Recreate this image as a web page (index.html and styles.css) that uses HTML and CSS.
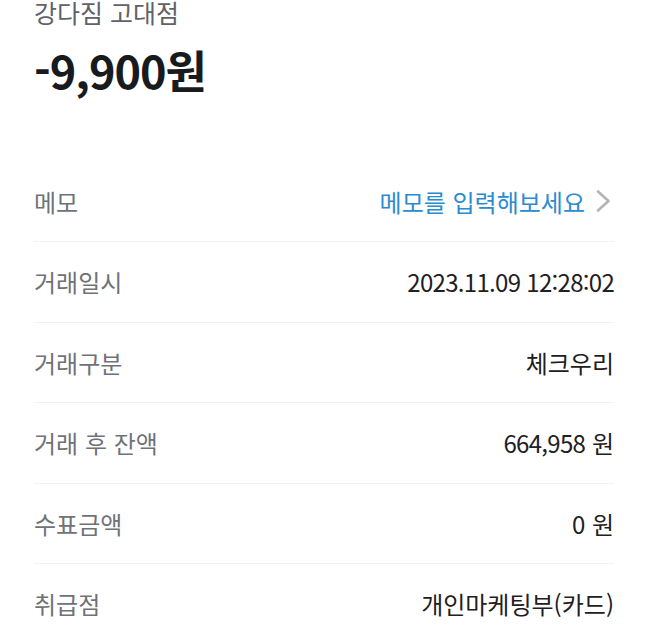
FILE: index.html
```html
<!DOCTYPE html>
<html lang="ko">
<head>
<meta charset="utf-8">
<link rel="stylesheet" href="styles.css">
</head>
<body>
<div class="page">
  <div class="header">
    <div class="store">강다짐 고대점</div>
    <div class="amount">-9,900원</div>
  </div>
  <div class="list">
    <div class="row">
      <span class="label">메모</span>
      <span class="value link">메모를 입력해보세요
        <svg class="chev" width="16" height="24" viewBox="0 0 16 24"><path d="M3 2.5 L13.5 12 L3 21.5" fill="none" stroke="#b4b4b4" stroke-width="2.6" stroke-linecap="round" stroke-linejoin="round"/></svg>
      </span>
    </div>
    <div class="row">
      <span class="label">거래일시</span>
      <span class="value num">2023.11.09 12:28:02</span>
    </div>
    <div class="row">
      <span class="label">거래구분</span>
      <span class="value">체크우리</span>
    </div>
    <div class="row">
      <span class="label">거래 후 잔액</span>
      <span class="value"><span class="num">664,958</span> 원</span>
    </div>
    <div class="row">
      <span class="label">수표금액</span>
      <span class="value">0 원</span>
    </div>
    <div class="row last">
      <span class="label">취급점</span>
      <span class="value">개인마케팅부(카드)</span>
    </div>
  </div>
</div>
</body>
</html>
```
FILE: styles.css
```css
html, body {
  margin: 0;
  padding: 0;
  background: #ffffff;
}
body {
  font-family: "Noto Sans CJK KR", "Noto Sans", sans-serif;
  overflow: hidden;
}
.page {
  padding: 0 34px;
  width: 580px;
}
.header {
  margin-top: -5px;
}
.store {
  font-size: 25px;
  line-height: 34px;
  color: #5f6266;
}
.amount {
  font-size: 45px;
  font-weight: 700;
  line-height: 54px;
  margin-top: 14px;
  color: #181a1d;
  letter-spacing: -1px;
}
.list {
  margin-top: 64.5px;
}
.row {
  height: 79.5px;
  display: flex;
  align-items: center;
  justify-content: space-between;
  border-bottom: 1px solid #f0f2f4;
  font-size: 24px;
}
.row.last {
  border-bottom: none;
}
.label {
  color: #6f7276;
}
.value {
  color: #1f2022;
}
.num {
  letter-spacing: -0.7px;
}
.link {
  color: #2b8bd0;
  display: flex;
  align-items: center;
  gap: 10px;
  margin-right: 3px;
}
.chev {
  display: block;
}
```
